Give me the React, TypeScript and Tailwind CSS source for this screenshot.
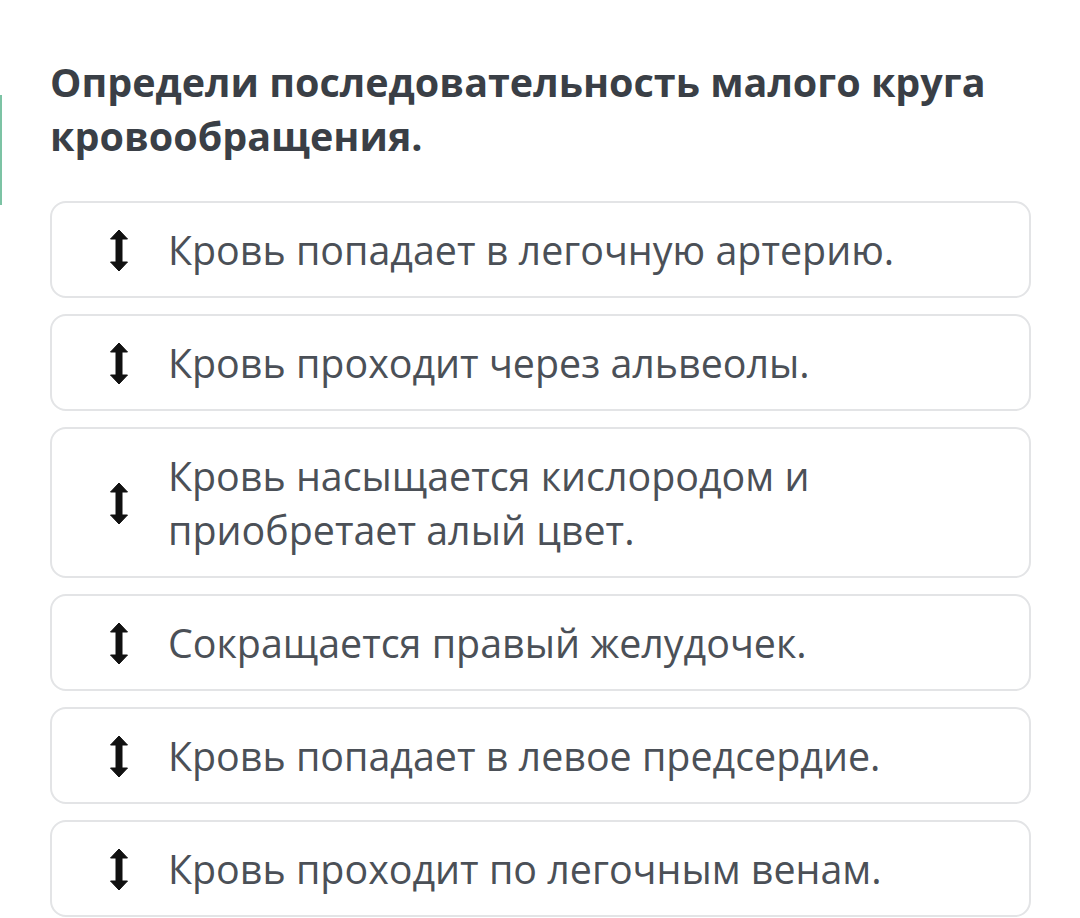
import React from 'react';

const items = [
  'Кровь попадает в легочную артерию.',
  'Кровь проходит через альвеолы.',
  'Кровь насыщается кислородом и приобретает алый цвет.',
  'Сокращается правый желудочек.',
  'Кровь попадает в левое предсердие.',
  'Кровь проходит по легочным венам.',
];

function DragIcon() {
  return (
    <svg width="18" height="41" viewBox="0 0 18 41" className="shrink-0">
      <path d="M9 0 L17.5 9 L12 9 L12 32 L17.5 32 L9 41 L0.5 32 L6 32 L6 9 L0.5 9 Z" fill="#111" strokeLinejoin="round" stroke="#111" strokeWidth="1" />
    </svg>
  );
}

export default function App() {
  return (
    <div
      className="relative w-[1080px] h-[918px] bg-white overflow-hidden"
      style={{ fontFamily: '"Open Sans", "Liberation Sans", sans-serif' }}
    >
      <div className="absolute left-0 top-[95px] w-[2px] h-[110px] bg-[#7cc3a4]" />
      <div className="pl-[50px] pr-[49px] pt-[55px]">
        <h1 className="text-[39.5px] font-bold leading-[54px] text-[#3a3f46]">
          Определи последовательность малого круга кровообращения.
        </h1>
        <div className="mt-[38px] flex flex-col gap-[16px]">
          {items.map((t) => (
            <div
              key={t}
              className="flex items-center rounded-[16px] border-2 border-[#e3e4e6] pl-[58px] pr-[40px] pt-[20px] pb-[19px]"
            >
              <DragIcon />
              <span className="ml-[40px] text-[39.4px] leading-[54px] text-[#4b5057]">{t}</span>
            </div>
          ))}
        </div>
      </div>
    </div>
  );
}
